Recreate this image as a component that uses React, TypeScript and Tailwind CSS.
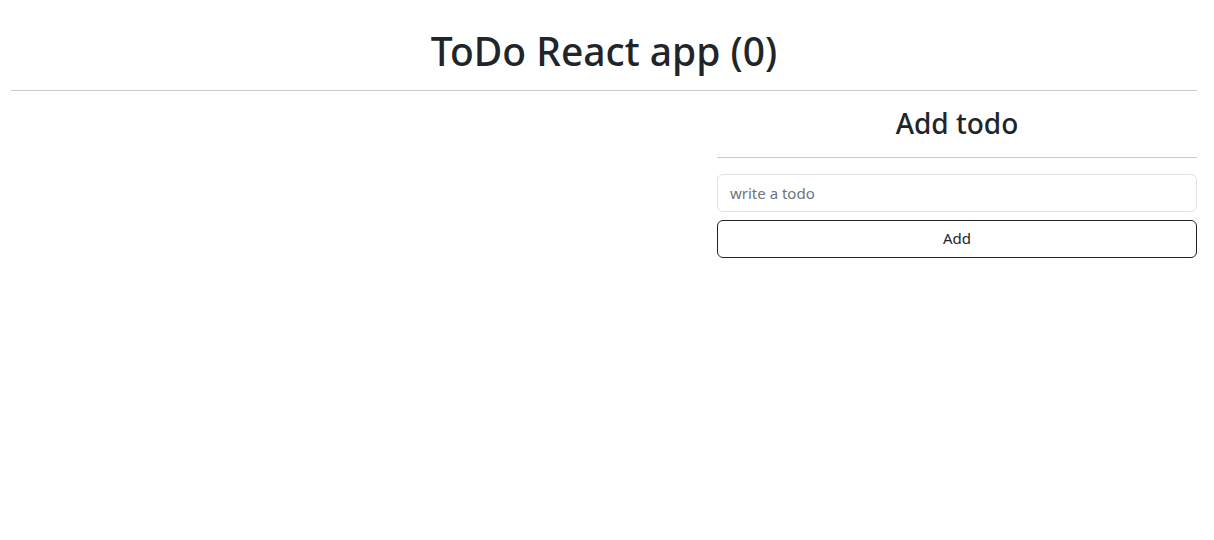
import React, { useState } from "react";

interface Todo {
  id: number;
  text: string;
}

function AddTodo({ onAdd }: { onAdd: (text: string) => void }) {
  const [value, setValue] = useState("");

  // add the todo and clear the input
  const handleAdd = () => {
    if (value.trim() === "") return;
    onAdd(value);
    setValue("");
  };

  return (
    <div className="w-[480px]">
      <h2 className="mt-4 text-center text-[28px] leading-[33.6px] font-medium text-[#212529]">
        Add todo
      </h2>
      <hr className="my-4 border-0 border-t border-[#c8c9ca]" />
      <input
        className="block w-full h-[38px] px-3 text-[15px] text-[#212529] bg-white border border-[#dee2e6] rounded-md outline-none placeholder:text-[#6c757d]"
        type="text"
        placeholder="write a todo"
        value={value}
        onChange={(e) => setValue(e.target.value)}
      />
      <button
        className="block w-full h-[38px] mt-2 text-[15px] text-[#212529] bg-white border border-[#212529] rounded-md"
        onClick={handleAdd}
      >
        Add
      </button>
    </div>
  );
}

export default function App() {
  const [todos, setTodos] = useState<Todo[]>([]);

  const addTodo = (text: string) => {
    setTodos([...todos, { id: Date.now(), text }]);
  };

  return (
    <div className="pl-[11px] pr-[17px] bg-white min-h-[540px] font-['Noto_Sans','Open_Sans',sans-serif] text-[#212529]">
      <h1 className="pt-[27px] text-center text-[39px] leading-[48px] font-medium">
        ToDo React app ({todos.length})
      </h1>
      <hr className="mt-[15px] border-0 border-t border-[#c8c9ca]" />
      <div className="flex">
        <div className="flex-1">
          {todos.map((todo) => (
            <div key={todo.id} className="py-2">
              {todo.text}
            </div>
          ))}
        </div>
        <AddTodo onAdd={addTodo} />
      </div>
    </div>
  );
}
